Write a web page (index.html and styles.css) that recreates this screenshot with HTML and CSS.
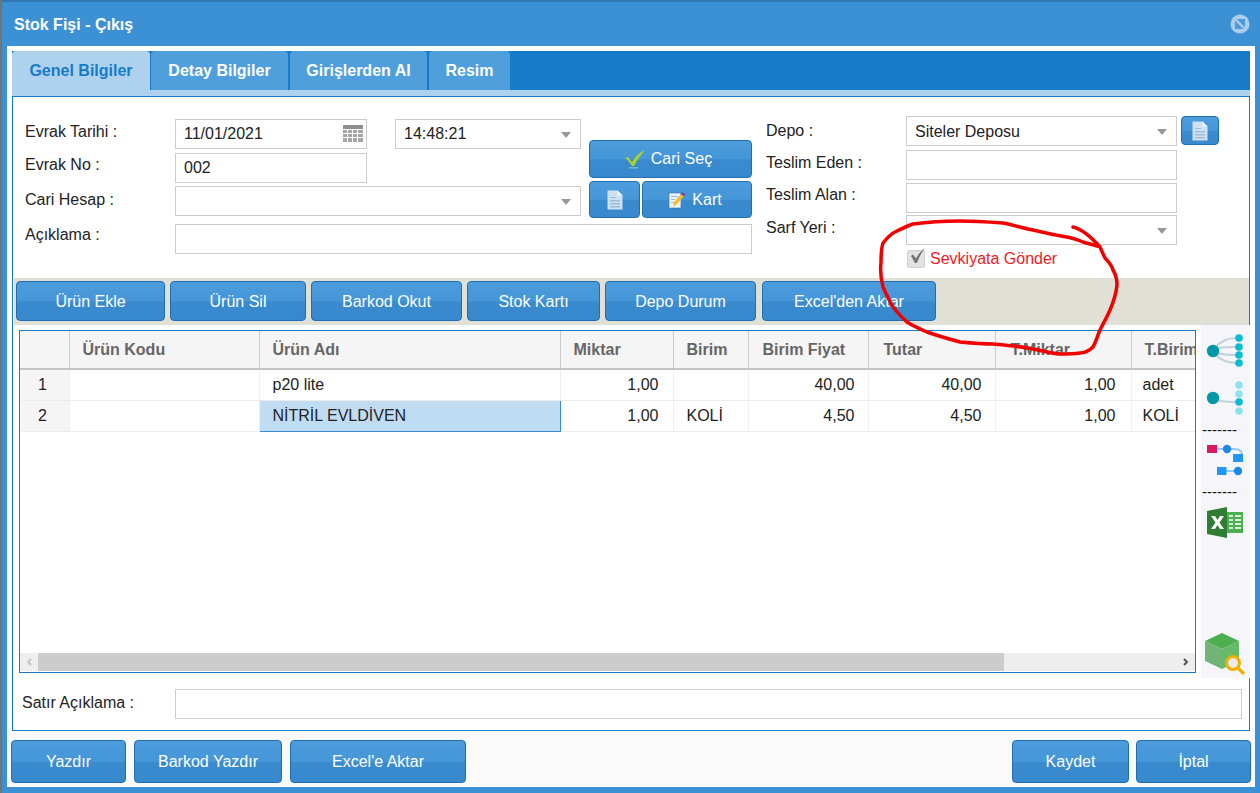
FILE: index.html
```html
<!DOCTYPE html>
<html lang="tr">
<head>
  <meta charset="UTF-8">
  <title>Stok Fişi - Çıkış</title>
  <link rel="stylesheet" href="styles.css">
</head>
<body>
  <div class="window">
    <div class="title-bar">
      <span>Stok Fişi - Çıkış</span>
      <svg class="close-icon" width="20" height="20" viewBox="0 0 20 20">
        <circle cx="10" cy="10" r="9.500" fill="#a9cdec"/>
        <path d="M5 5h10v10H5z" fill="#4f98d6"/>
        <path d="M4.500 4.500L15.500 15.500" stroke="#a9cdec" stroke-width="2.400"/>
      </svg>
    </div>
    <div class="content">
      <div class="tabs">
        <div class="tab active">Genel Bilgiler</div>
        <div class="tab">Detay Bilgiler</div>
        <div class="tab">Girişlerden Al</div>
        <div class="tab">Resim</div>
      </div>
      <div class="tab-strip"></div>
      <div class="panel">
        <div class="form">
          <div class="form-left">
            <div class="form-main">
              <div class="form-rows">
                <div class="row row-a">
                  <label>Evrak Tarihi :</label>
                  <div class="input w192">11/01/2021
                    <svg class="cal" width="20" height="18" viewBox="0 0 20 18">
                      <path fill="#8f8f8f" d="M0 0h20v4H0z"/>
                      <path fill="#a5a5a5" d="M0 5h4v3H0zM5 5h4v3H5zM10 5h4v3h-4zM15 5h5v3h-5zM0 9h4v3H0zM5 9h4v3H5zM10 9h4v3h-4zM15 9h5v3h-5zM0 13h4v4H0zM5 13h4v4H5zM10 13h4v4h-4zM15 13h5v4h-5z"/>
                    </svg>
                  </div>
                  <div class="input w186 combo">14:48:21<i class="arrow"></i></div>
                </div>
                <div class="row row-b">
                  <label>Evrak No :</label>
                  <div class="input w192">002</div>
                </div>
                <div class="row">
                  <label>Cari Hesap :</label>
                  <div class="input w406 combo"><i class="arrow"></i></div>
                </div>
              </div>
              <div class="form-btns">
                <div class="btn btn-cari">
                  <svg width="20" height="19" viewBox="0 0 20 19">
                    <path d="M0 8l3-1 4 5C10 7 15 2 20 0c-4 5-8 10-11 16H7C5 13 3 10 0 8z" fill="#a5d32f"/>
                    <path d="M4 17h9v1.500H4z" fill="#9cc7a4" opacity=".7"/>
                  </svg>
                  Cari Seç
                </div>
                <div class="btn-pair">
                  <div class="btn btn-doc">
                    <svg width="16" height="20" viewBox="0 0 16 20">
                      <path d="M.5.5h10l5 5v14H.5z" fill="#cfe2f3"/>
                      <path d="M10.500.5v5h5z" fill="#f2f8fc"/>
                      <path d="M3 7h6v1H3zM3 10h10v1.500H3zM3 13h10v1.500H3zM3 16h10v1.500H3z" fill="#9dbcd6"/>
                    </svg>
                  </div>
                  <div class="btn btn-kart">
                    <svg width="18" height="18" viewBox="0 0 18 18">
                      <path d="M1 2h12v15H1z" fill="#eef4fa" stroke="#2f6fa8" stroke-width=".6"/>
                      <path d="M3 5h7v1H3zM3 8h4v1H3zM3 11h3v1H3z" fill="#9db9d3"/>
                      <path d="M14 2l3 2-8 9-4 3 1-5z" fill="#f2bf2e"/>
                      <path d="M14 1l3.500 2.500-1.500 2-3.500-2.500z" fill="#7a3fa8"/>
                    </svg>
                    Kart
                  </div>
                </div>
              </div>
            </div>
            <div class="row row-desc">
              <label>Açıklama :</label>
              <div class="input w577"></div>
            </div>
          </div>
          <div class="form-right">
            <div class="row row-c">
              <label class="lbl-r">Depo :</label>
              <div class="input w271 combo">Siteler Deposu<i class="arrow"></i></div>
              <div class="btn btn-depo">
                <svg width="16" height="20" viewBox="0 0 16 20">
                  <path d="M.5.5h10l5 5v14H.5z" fill="#cfe2f3"/>
                  <path d="M10.500.5v5h5z" fill="#f2f8fc"/>
                  <path d="M3 7h6v1H3zM3 10h10v1.500H3zM3 13h10v1.500H3zM3 16h10v1.500H3z" fill="#9dbcd6"/>
                </svg>
              </div>
            </div>
            <div class="row row-d">
              <label class="lbl-r">Teslim Eden :</label>
              <div class="input w271"></div>
            </div>
            <div class="row row-e">
              <label class="lbl-r">Teslim Alan :</label>
              <div class="input w271"></div>
            </div>
            <div class="row">
              <label class="lbl-r">Sarf Yeri :</label>
              <div class="input w271 combo"><i class="arrow"></i></div>
            </div>
            <div class="check-row">
              <div class="check">
                <svg width="18" height="18" viewBox="0 0 18 18">
                  <path d="M3 8l2-1.500 3 4C10 6.500 13 3 17 0c-3 4-6 9-8 15H7z" fill="#757575"/>
                </svg>
              </div>
              <span>Sevkiyata Gönder</span>
            </div>
          </div>
        </div>

        <div class="toolbar">
          <div class="btn">Ürün Ekle</div>
          <div class="btn">Ürün Sil</div>
          <div class="btn">Barkod Okut</div>
          <div class="btn">Stok Kartı</div>
          <div class="btn">Depo Durum</div>
          <div class="btn">Excel'den Aktar</div>
        </div>

        <div class="grid-area">
          <div class="grid">
            <div class="grid-body">
              <table>
                <colgroup>
                  <col class="c-no"><col class="c-code"><col class="c-name"><col class="c-qty"><col class="c-unit">
                  <col class="c-price"><col class="c-total"><col class="c-tqty"><col class="c-tunit">
                </colgroup>
                <thead>
                  <tr>
                    <th></th><th>Ürün Kodu</th><th>Ürün Adı</th><th>Miktar</th><th>Birim</th>
                    <th>Birim Fiyat</th><th>Tutar</th><th>T.Miktar</th><th>T.Birim</th>
                  </tr>
                </thead>
                <tbody>
                  <tr>
                    <td class="no">1</td><td></td><td>p20 lite</td><td class="num">1,00</td><td></td>
                    <td class="num">40,00</td><td class="num">40,00</td><td class="num">1,00</td><td>adet</td>
                  </tr>
                  <tr>
                    <td class="no">2</td><td></td><td class="selected">NİTRİL EVLDİVEN</td><td class="num">1,00</td><td>KOLİ</td>
                    <td class="num">4,50</td><td class="num">4,50</td><td class="num">1,00</td><td>KOLİ</td>
                  </tr>
                </tbody>
              </table>
            </div>
            <div class="scrollbar">
              <div class="scroll-btn">
                <svg width="6" height="8" viewBox="0 0 6 8"><path d="M5 1L2 4l3 3" fill="none" stroke="#c4c4c4" stroke-width="2"/></svg>
              </div>
              <div class="scroll-thumb"></div>
              <div class="scroll-btn scroll-end">
                <svg width="6" height="8" viewBox="0 0 6 8"><path d="M1 1l3 3-3 3" fill="none" stroke="#555" stroke-width="2"/></svg>
              </div>
            </div>
          </div>
          <div class="side">
            <svg class="ico-tree" width="44" height="36" viewBox="0 0 44 36">
              <g fill="none" stroke="#c3d1d8" stroke-width="2">
                <path d="M9 15C15 7 22 5 31 5M10 16C17 13 24 14 31 14M10 20C17 22 24 22 31 22M9 21C15 28 22 30 31 30"/>
              </g>
              <circle cx="7" cy="18" r="6.200" fill="#0097a7"/>
              <g fill="#00bcd4">
                <circle cx="33" cy="5" r="3.800"/><circle cx="33" cy="14" r="3.800"/><circle cx="33" cy="22" r="3.800"/><circle cx="33" cy="30" r="3.800"/>
              </g>
            </svg>
            <svg class="ico-leaf" width="44" height="36" viewBox="0 0 44 36">
              <path d="M10 20C16 22 24 22 31 22" fill="none" stroke="#c3d1d8" stroke-width="2"/>
              <circle cx="7" cy="18" r="6.200" fill="#0097a7"/>
              <g fill="#8ce3ee">
                <circle cx="33" cy="5" r="3.800"/><circle cx="33" cy="14" r="3.800"/><circle cx="33" cy="31" r="3.800"/>
              </g>
              <circle cx="33" cy="22" r="3.800" fill="#00bcd4"/>
            </svg>
            <div class="dash dash-a">-------</div>
            <svg class="ico-flow" width="40" height="34" viewBox="0 0 40 34">
              <path d="M11 5h17c5 0 8 2 8 6M20 27h12" fill="none" stroke="#90caf9" stroke-width="2.200"/>
              <path d="M1 1h10v8H1z" fill="#d81b60"/>
              <circle cx="21" cy="5" r="4.200" fill="#1e88e5"/>
              <path d="M27 10h10v8H27zM11 23h9.500v8H11z" fill="#2196f3"/>
              <circle cx="32" cy="27" r="4.200" fill="#1e88e5"/>
            </svg>
            <div class="dash dash-b">-------</div>
            <svg class="ico-excel" width="37" height="31" viewBox="0 0 37 31">
              <path d="M20 5h16v21H20z" fill="#4caf50"/>
              <path d="M22 8h4v2h-4zM28 8h6v2h-6zM22 12h4v2h-4zM28 12h6v2h-6zM22 16h4v2h-4zM28 16h6v2h-6zM22 20h4v2h-4zM28 20h6v2h-6z" fill="#dcefdd"/>
              <path d="M20 0v31L0 27V4z" fill="#2e7d32"/>
              <path d="M4 9h4l2.500 4L13 9h4l-4.500 6.500L17 22h-4l-2.500-4L8 22H4l4.500-6.500z" fill="#fff"/>
            </svg>
            <svg class="ico-box" width="42" height="42" viewBox="0 0 42 42">
              <path d="M1 8L18 0l17 8-17 8z" fill="#4caf50"/>
              <path d="M1 8l17 8v20L1 28z" fill="#72b376"/>
              <path d="M35 8l-17 8v20l17-8z" fill="#66bb6a"/>
              <circle cx="29" cy="30" r="6.500" fill="#eceaea" stroke="#efb000" stroke-width="3"/>
              <path d="M34 35l6 6" stroke="#efb000" stroke-width="3.200"/>
            </svg>
          </div>
        </div>

        <div class="row row-line">
          <label class="lbl-line">Satır Açıklama :</label>
          <div class="input w1067"></div>
        </div>
      </div>

      <div class="footer">
        <div class="btn">Yazdır</div>
        <div class="btn">Barkod Yazdır</div>
        <div class="btn">Excel'e Aktar</div>
        <div class="btn foot-right">Kaydet</div>
        <div class="btn">İptal</div>
      </div>
    </div>
  </div>

  <!-- kirmizi isaret -->
  <svg class="scribble" width="1260" height="793" viewBox="0 0 1260 793">
    <path d="M1073 227C1082 229 1092 238 1100 247C1103 254 1104 256 1105 258C1109 262 1112 266 1113 270C1116 275 1117 280 1117 285C1116 294 1113 303 1110 310C1107 317 1103 324 1100 330C1097 337 1096 342 1093 347C1089 351 1085 353 1080 353C1073 354 1066 354 1060 354C1048 353 1037 349 1027 348C1016 346 1004 345 993 344C982 344 971 343 960 342C949 339 938 336 927 332C920 329 913 326 907 322C901 317 897 312 893 307C889 300 886 294 883 287C881 279 880 271 881 263C881 256 881 249 883 243C887 238 891 234 895 232C901 229 907 226 913 224C928 222 944 221 960 221C975 221 989 222 1003 223C1013 225 1023 228 1033 230C1044 233 1056 235 1067 237C1073 238 1078 240 1083 242C1089 244 1095 245 1100 247" fill="none" stroke="#f00000" stroke-width="3.500" stroke-linecap="round"/>
  </svg>
</body>
</html>
```

FILE: styles.css
```css
*{
  margin: 0px;
  padding: 0px;
  box-sizing: border-box;
}
html,body{
  width: 1260px;
  height: 793px;
  overflow: hidden;
}
body{
  background-color: #6f7478;
  font-family: "Liberation Sans", Arial, sans-serif;
  font-size: 16px;
  color: #222;
}
.window{
  margin-left: 2px;
  height: 793px;
  background-color: #3c90d4;
  border-top: 2px solid #2f78b3;
  padding: 0px 5px 6px 5px;
}
.title-bar{
  height: 44px;
  display: flex;
  align-items: center;
  justify-content: space-between;
  padding-left: 7px;
  color: #fff;
  font-size: 16px;
  font-weight: bold;
}
.title-bar span{
  padding-top: 1px;
}
.close-icon{
  margin-right: 5px;
}
.content{
  height: 741px;
  background-color: #fff;
  padding-top: 5px;
}

/* tabs */
.tabs{
  margin: 0px 5px;
  height: 39px;
  background-color: #167bc9;
  display: flex;
  gap: 2px;
}
.tab{
  width: 137px;
  display: flex;
  align-items: center;
  justify-content: center;
  padding-top: 1px;
  background-color: #4e9fdc;
  color: #fff;
  font-size: 16px;
  font-weight: bold;
  border-radius: 4px 4px 0px 0px;
}
.tab:nth-child(1){
  width: 138px;
  margin-right: -1px;
}
.tab:nth-child(4){
  width: 81px;
}
.tab.active{
  background-color: #aed2ee;
  color: #167bc9;
}
.tab-strip{
  margin: 0px 5px;
  height: 6px;
  background-color: #aed2ee;
}
.panel{
  margin: 0px 5px;
  height: 635px;
  border: 1px solid #167bc9;
}

/* form */
.form{
  height: 181px;
  display: flex;
  padding-left: 12px;
}
.form-left{
  width: 727px;
  padding-top: 22px;
}
.form-main{
  display: flex;
  height: 99px;
}
.form-rows{
  width: 564px;
}
.form-btns{
  width: 163px;
  padding-top: 21px;
}
.row{
  display: flex;
  align-items: center;
}
.row label{
  width: 150px;
  padding-bottom: 3px;
}
.row .lbl-r{
  width: 140px;
  padding-bottom: 5px;
}
.row-a{
  margin-bottom: 4px;
}
.row-a label{
  padding-bottom: 5px;
}
.row-a .w186{
  margin-left: 28px;
}
.row-b{
  margin-bottom: 3px;
}
.row-b label{
  padding-bottom: 7px;
}
.row-desc{
  margin-top: 6px;
}
.row-desc label{
  padding-bottom: 9px;
}
.row-c{
  margin-bottom: 4px;
}
.row-c .lbl-r{
  padding-bottom: 0px;
}
.row-c .input{
  padding-top: 1px;
}
.row-d{
  margin-bottom: 3px;
}
.row-e{
  margin-bottom: 2px;
}
.row-e .lbl-r{
  padding-bottom: 7px;
}
.input{
  position: relative;
  height: 30px;
  border: 1px solid #ccc;
  background-color: #fff;
  padding-left: 8px;
  display: flex;
  align-items: center;
}
.w192{
  width: 192px;
}
.w186{
  width: 186px;
}
.w406{
  width: 406px;
}
.w577{
  width: 577px;
}
.w271{
  width: 271px;
}
.w1067{
  width: 1067px;
}
.cal{
  position: absolute;
  right: 3px;
  top: 5px;
}
.arrow{
  position: absolute;
  right: 9px;
  top: 12px;
  width: 0px;
  height: 0px;
  border-left: 5.500px solid transparent;
  border-right: 5.500px solid transparent;
  border-top: 6px solid #999;
}
.form-right{
  margin-left: 14px;
  padding-top: 19px;
}
.check-row{
  display: flex;
  align-items: center;
  margin-top: 4px;
  padding-left: 141px;
  color: #ee1c25;
}
.check-row span{
  margin-top: 1px;
}
.check{
  width: 18px;
  height: 18px;
  margin-right: 5px;
  background-color: #e2e2e2;
  border: 1px solid #cfcfcf;
  border-radius: 2px;
}
.check svg{
  display: block;
  margin-top: -3px;
}

/* buttons */
.btn{
  display: flex;
  align-items: center;
  justify-content: center;
  gap: 6px;
  height: 40px;
  color: #fff;
  font-size: 16px;
  border: 1px solid #1b6fb2;
  border-radius: 4px;
  background: linear-gradient(to bottom, #4d9cdc 0%, #4596d8 50%, #3a8bce 52%, #3788cc 100%);
  white-space: nowrap;
}
.btn-cari{
  width: 163px;
  height: 38px;
  margin-bottom: 3px;
  padding-right: 4px;
}
.btn-pair{
  display: flex;
  gap: 2px;
}
.btn-doc{
  width: 51px;
  height: 37px;
}
.btn-kart{
  width: 110px;
  height: 37px;
  padding-right: 4px;
}
.btn-depo{
  width: 38px;
  height: 29px;
  margin-left: 4px;
  align-self: flex-start;
  padding-top: 0px;
}
.toolbar{
  margin-left: 1px;
  height: 47px;
  background-color: #e0e0d6;
  padding: 3px 0px 0px 2px;
  display: flex;
  gap: 5px;
}
.toolbar .btn{
  padding-top: 2px;
}
.toolbar .btn:nth-child(1){
  width: 149px;
}
.toolbar .btn:nth-child(2){
  width: 136px;
}
.toolbar .btn:nth-child(3){
  width: 151px;
}
.toolbar .btn:nth-child(4){
  width: 133px;
}
.toolbar .btn:nth-child(5){
  width: 151px;
}
.toolbar .btn:nth-child(6){
  width: 174px;
  margin-left: 1px;
}

/* grid */
.grid-area{
  height: 353px;
  display: flex;
  padding-left: 6px;
}
.grid{
  width: 1177px;
  margin: 5px 0px;
  border: 1px solid #167bc9;
  display: flex;
  flex-direction: column;
}
.grid-body{
  flex: 1;
  overflow: hidden;
}
table{
  width: 1261px;
  table-layout: fixed;
  border-collapse: collapse;
}
.c-no{
  width: 49px;
}
.c-code{
  width: 190px;
}
.c-name{
  width: 301px;
}
.c-qty{
  width: 113px;
}
.c-unit{
  width: 75px;
}
.c-price{
  width: 120px;
}
.c-total{
  width: 127px;
}
.c-tqty{
  width: 136px;
}
.c-tunit{
  width: 150px;
}
th{
  height: 38px;
  background-color: #f5f5f5;
  border-right: 1px solid #ccc;
  border-bottom: 2px solid #c4c4c4;
  color: #666;
  font-size: 16px;
  text-align: left;
  padding-left: 13px;
}
th:nth-child(6){
  padding-left: 14px;
}
th:nth-child(7),th:nth-child(8){
  padding-left: 15px;
}
td{
  height: 31px;
  border-right: 1px solid #f0f0f0;
  border-bottom: 1px solid #ececec;
  padding: 1px 12px 0px 13px;
  white-space: nowrap;
}
td:last-child{
  padding-left: 11px;
}
td.no{
  background-color: #f5f5f5;
  padding-left: 18px;
}
td.num{
  text-align: right;
  padding-right: 13px;
}
td.num:nth-child(4){
  padding-right: 14px;
}
td.num:nth-child(8){
  padding-right: 15px;
}
td.selected{
  background-color: #c0dcf2;
  border: 1px solid #3a8bcf;
}
.scrollbar{
  height: 18px;
  display: flex;
  background-color: #eee;
  margin-bottom: 1px;
}
.scroll-btn{
  width: 18px;
  display: flex;
  align-items: center;
  justify-content: center;
}
.scroll-end{
  margin-left: auto;
}
.scroll-thumb{
  width: 966px;
  background-color: #ccc;
}

/* side icons */
.side{
  width: 49px;
  margin-left: 5px;
  background-color: #f6f6fa;
  display: flex;
  flex-direction: column;
  align-items: flex-start;
  padding-top: 8px;
}
.side svg{
  display: block;
  flex-shrink: 0;
}
.ico-tree,.ico-leaf{
  margin-left: 5px;
}
.ico-leaf{
  margin-top: 11px;
}
.dash{
  font-size: 15px;
  line-height: 14px;
  color: #111;
  padding-left: 1px;
}
.dash-a{
  margin-top: 7px;
}
.dash-b{
  margin-top: 7px;
}
.ico-flow{
  margin: 7px 0px 0px 5px;
}
.ico-excel{
  margin: 8px 0px 0px 6px;
}
.ico-box{
  margin: auto 0px 3px 3px;
}
.row-line{
  padding-top: 11px;
}
.row .lbl-line{
  width: 162px;
  padding-left: 9px;
  padding-bottom: 3px;
}

/* footer */
.footer{
  height: 55px;
  background-color: #fafafa;
  padding: 9px 4px 0px 4px;
  display: flex;
  gap: 8px;
}
.footer .btn{
  height: 43px;
}
.footer .btn:nth-child(1){
  width: 115px;
}
.footer .btn:nth-child(2){
  width: 148px;
}
.footer .btn:nth-child(3){
  width: 176px;
}
.footer .btn:nth-child(4){
  width: 117px;
}
.footer .btn:nth-child(5){
  width: 115px;
  margin-left: -1px;
}
.foot-right{
  margin-left: auto;
}

/* elle cizilmis daire, her seyin ustunde */
.scribble{
  position: absolute;
  left: 0px;
  top: 0px;
  pointer-events: none;
}
```
